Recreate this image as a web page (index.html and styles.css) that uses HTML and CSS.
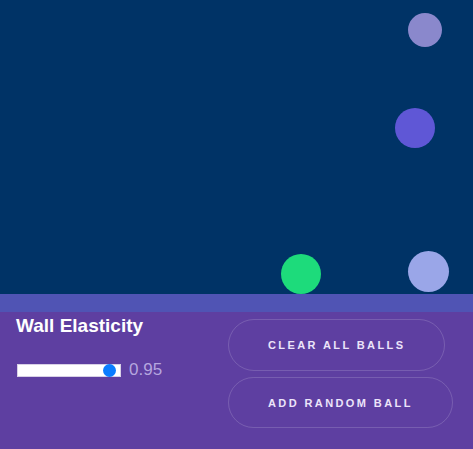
FILE: index.html
```html
<!DOCTYPE html>
<html lang="en">
<head>
<meta charset="utf-8">
<title>Bouncing Balls</title>
<link rel="stylesheet" href="styles.css">
</head>
<body>
<div class="sim">
  <div class="canvas">
    <span class="ball ball-a"></span>
    <span class="ball ball-b"></span>
    <span class="ball ball-c"></span>
    <span class="ball ball-d"></span>
  </div>
  <div class="floor"></div>
  <div class="panel">
    <div class="control">
      <label class="control-title" for="elasticity">Wall Elasticity</label>
      <div class="slider-row">
        <input id="elasticity" class="slider" type="range" min="0" max="1" step="0.01" value="0.95">
        <span class="slider-value">0.95</span>
      </div>
    </div>
    <div class="actions">
      <button class="btn">CLEAR ALL BALLS</button>
      <button class="btn">ADD RANDOM BALL</button>
    </div>
  </div>
</div>
</body>
</html>
```
FILE: styles.css
```css
* { box-sizing: border-box; }
html, body {
  margin: 0;
  padding: 0;
}
body {
  font-family: "Liberation Sans", Arial, sans-serif;
  background: #5e3fa1;
  width: 473px;
  height: 449px;
  overflow: hidden;
}
.sim {
  display: flex;
  flex-direction: column;
  height: 449px;
}
.canvas {
  position: relative;
  height: 294px;
  background: #003366;
}
.ball {
  position: absolute;
  border-radius: 50%;
}
.ball-a { left: 408px; top: 13px; width: 34px; height: 34px; background: #8a88cc; }
.ball-b { left: 395px; top: 108px; width: 40px; height: 40px; background: #5f57d6; }
.ball-c { left: 281px; top: 254px; width: 40px; height: 40px; background: #1ddb7b; }
.ball-d { left: 408px; top: 251px; width: 41px; height: 41px; background: #9aa6e8; }
.floor {
  height: 18px;
  background: #5054b4;
}
.panel {
  flex: 1;
  background: #5e3fa1;
  display: flex;
  padding: 7px 0 0 16px;
}
.control {
  width: 212px;
  margin-top: -4px;
  display: flex;
  flex-direction: column;
}
.control-title {
  color: #ffffff;
  font-weight: bold;
  font-size: 19px;
  line-height: 22px;
}
.slider-row {
  margin-top: 23px;
  display: flex;
  align-items: center;
  gap: 8px;
  padding-left: 1px;
}
.slider {
  -webkit-appearance: none;
  appearance: none;
  width: 104px;
  height: 13px;
  margin: 0;
  background: #ffffff;
  border: 1px solid #d8d0e6;
  outline: none;
}
.slider::-webkit-slider-thumb {
  -webkit-appearance: none;
  appearance: none;
  width: 13px;
  height: 13px;
  border-radius: 50%;
  background: #0a7cff;
  border: none;
}
.slider-value {
  color: #b5a6df;
  font-size: 17px;
  line-height: 20px;
}
.actions {
  display: flex;
  flex-direction: column;
  align-items: flex-start;
  gap: 6px;
}
.btn {
  height: 52px;
  padding: 0 39px;
  border: 1px solid rgba(255, 255, 255, 0.16);
  border-radius: 999px;
  background: transparent;
  color: #ece4fa;
  font-family: "Liberation Sans", Arial, sans-serif;
  font-weight: bold;
  font-size: 11px;
  letter-spacing: 2.4px;
  line-height: 12px;
  cursor: pointer;
}
.btn + .btn { height: 51px; }
```
